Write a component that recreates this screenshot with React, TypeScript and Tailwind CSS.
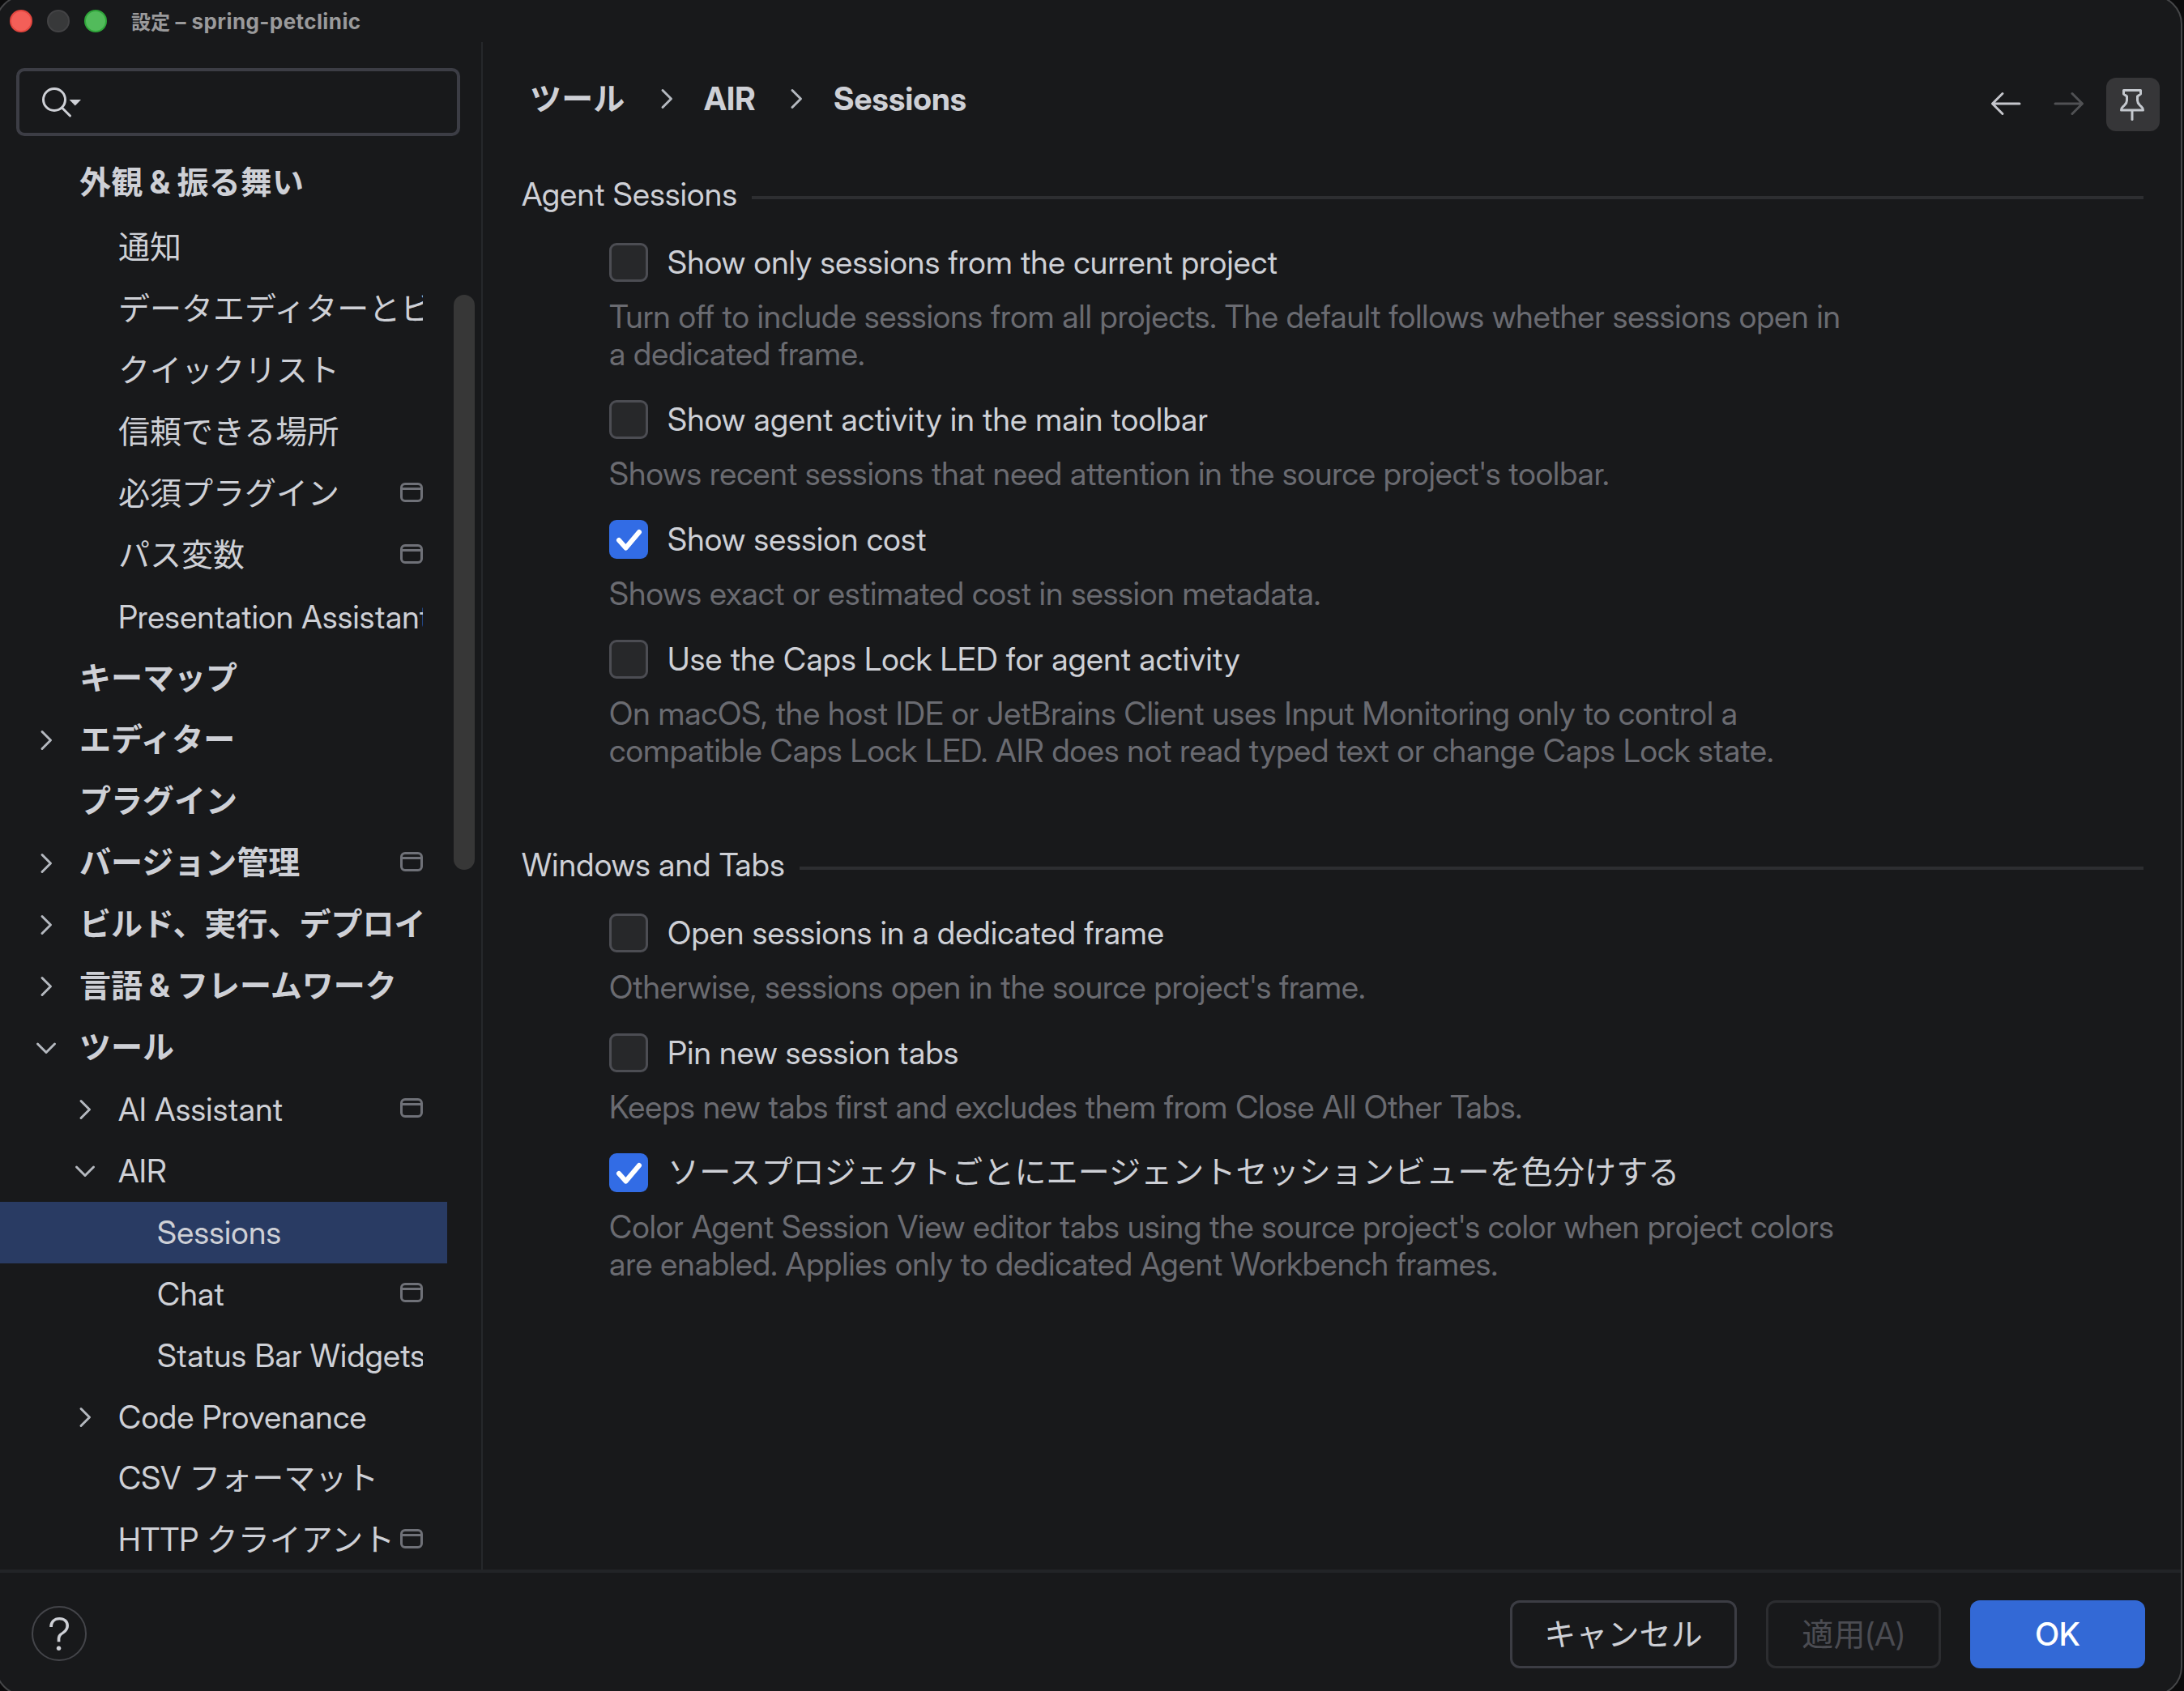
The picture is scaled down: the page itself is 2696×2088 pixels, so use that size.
import clsx from 'clsx';

interface TreeItem {
  label: string;
  level: 0 | 1 | 2;
  chevron?: 'right' | 'down';
  project?: boolean;
  selected?: boolean;
}

interface Option {
  label: string;
  checked?: boolean;
  description: string[];
}

const TREE: TreeItem[] = [
  { label: '通知', level: 1 },
  { label: 'データエディターとビューアー', level: 1 },
  { label: 'クイックリスト', level: 1 },
  { label: '信頼できる場所', level: 1 },
  { label: '必須プラグイン', level: 1, project: true },
  { label: 'パス変数', level: 1, project: true },
  { label: 'Presentation Assistant', level: 1 },
  { label: 'キーマップ', level: 0 },
  { label: 'エディター', level: 0, chevron: 'right' },
  { label: 'プラグイン', level: 0 },
  { label: 'バージョン管理', level: 0, chevron: 'right', project: true },
  { label: 'ビルド、実行、デプロイ', level: 0, chevron: 'right' },
  { label: '言語 & フレームワーク', level: 0, chevron: 'right' },
  { label: 'ツール', level: 0, chevron: 'down' },
  { label: 'AI Assistant', level: 1, chevron: 'right', project: true },
  { label: 'AIR', level: 1, chevron: 'down' },
  { label: 'Sessions', level: 2, selected: true },
  { label: 'Chat', level: 2, project: true },
  { label: 'Status Bar Widgets', level: 2 },
  { label: 'Code Provenance', level: 1, chevron: 'right' },
  { label: 'CSV フォーマット', level: 1 },
  { label: 'HTTP クライアント', level: 1, project: true },
];

const AGENT_SESSIONS: Option[] = [
  {
    label: 'Show only sessions from the current project',
    description: [
      'Turn off to include sessions from all projects. The default follows whether sessions open in',
      'a dedicated frame.',
    ],
  },
  {
    label: 'Show agent activity in the main toolbar',
    description: ["Shows recent sessions that need attention in the source project's toolbar."],
  },
  {
    label: 'Show session cost',
    checked: true,
    description: ['Shows exact or estimated cost in session metadata.'],
  },
  {
    label: 'Use the Caps Lock LED for agent activity',
    description: [
      'On macOS, the host IDE or JetBrains Client uses Input Monitoring only to control a',
      'compatible Caps Lock LED. AIR does not read typed text or change Caps Lock state.',
    ],
  },
];

const WINDOWS_AND_TABS: Option[] = [
  {
    label: 'Open sessions in a dedicated frame',
    description: ["Otherwise, sessions open in the source project's frame."],
  },
  {
    label: 'Pin new session tabs',
    description: ['Keeps new tabs first and excludes them from Close All Other Tabs.'],
  },
  {
    label: 'ソースプロジェクトごとにエージェントセッションビューを色分けする',
    checked: true,
    description: [
      "Color Agent Session View editor tabs using the source project's color when project colors",
      'are enabled. Applies only to dedicated Agent Workbench frames.',
    ],
  },
];

const isLatin = (text: string) => /^[\x20-\x7e]+$/.test(text);

function Chevron({ direction }: { direction: 'right' | 'down' }) {
  return (
    <svg
      viewBox="0 0 28 28"
      className={clsx('size-7', direction === 'down' && 'rotate-90')}
      fill="none"
      stroke="#b4b8bf"
      strokeWidth="3"
      strokeLinecap="round"
      strokeLinejoin="round"
    >
      <path d="M9 3.5 19.5 14 9 24.5" />
    </svg>
  );
}

function ProjectIcon() {
  return (
    <svg viewBox="0 0 28 24" className="mb-1 h-6 w-7 shrink-0" fill="none" stroke="#6f7178" strokeWidth="3">
      <rect x="1.5" y="1.5" width="25" height="21" rx="4.5" />
      <path d="M2 7.5h24" />
    </svg>
  );
}

function TreeRow({ item }: { item: TreeItem }) {
  return (
    <div className={clsx('flex h-[76px] w-[552px] shrink-0 items-center pr-[30px]', item.selected && 'bg-[#293b63]')}>
      <div
        className={clsx(
          'flex shrink-0 justify-end pr-[27px]',
          item.level === 0 && 'w-[98px]',
          item.level === 1 && 'w-[146px]',
          item.level === 2 && 'w-[194px]'
        )}
      >
        {item.chevron && <Chevron direction={item.chevron} />}
      </div>
      <div
        className={clsx(
          'min-w-0 flex-1 overflow-hidden whitespace-nowrap',
          item.level === 0 && 'font-bold',
          isLatin(item.label) ? 'tracking-[0.26px]' : 'pb-[2px] tracking-normal'
        )}
      >
        {item.label}
      </div>
      {item.project && <ProjectIcon />}
    </div>
  );
}

function Sidebar() {
  return (
    <aside className="flex w-[596px] shrink-0 flex-col border-r-2 border-[#26282b] pt-8">
      <div className="ml-5 flex h-[84px] w-[548px] shrink-0 items-center rounded-[10px] border-4 border-[#3c3d45] pl-[26px]">
        <svg viewBox="0 0 52 40" className="h-10 w-[52px]" fill="none" stroke="#ced0d6" strokeWidth="3" strokeLinecap="round">
          <circle cx="17" cy="17" r="13.5" />
          <path d="M26.5 27 36.5 37" />
          <path d="M35.5 17h14.5l-7.2 7.5z" fill="#ced0d6" stroke="none" />
        </svg>
      </div>
      <div className="flex min-h-0 flex-1 justify-between pr-2 pt-5">
        <div className="flex flex-col overflow-hidden">
          <div className="mb-1 flex h-[76px] shrink-0 items-center pb-[2px] pl-[98px] font-bold">外観 &amp; 振る舞い</div>
          {TREE.map((item) => (
            <TreeRow key={item.label} item={item} />
          ))}
        </div>
        <div className="mt-44 h-[710px] w-[26px] rounded-full bg-[#373737]" />
      </div>
    </aside>
  );
}

function Checkbox({ checked }: { checked?: boolean }) {
  if (!checked) {
    return <div className="size-12 shrink-0 rounded-[9px] border-3 border-[#4c4d53] bg-[#27282a]" />;
  }
  return (
    <div className="size-12 shrink-0 rounded-[9px] bg-[#326ce5]">
      <svg viewBox="0 0 48 48" fill="none" stroke="#fff" strokeWidth="6" strokeLinecap="round" strokeLinejoin="round">
        <path d="M12 25 20.5 34.5 37 15" />
      </svg>
    </div>
  );
}

function Section({ title, options }: { title: string; options: Option[] }) {
  return (
    <section>
      <div className="flex h-12 items-center gap-[18px]">
        <h2 className="tracking-[0.3px]">{title}</h2>
        <div className="mt-2 h-1 flex-1 bg-[#2d2e31]" />
      </div>
      <div className="mt-9 flex flex-col gap-[34px] pl-[108px]">
        {options.map((option) => (
          <div key={option.label}>
            <div className="flex h-12 items-center gap-6">
              <Checkbox checked={option.checked} />
              <span className={clsx('whitespace-nowrap', isLatin(option.label) ? 'tracking-[0.28px]' : 'pb-[3px]')}>
                {option.label}
              </span>
            </div>
            <div className="mt-5 whitespace-nowrap tracking-[0.06px] text-[#6a6b71]">
              {option.description.map((line) => (
                <div key={line}>{line}</div>
              ))}
            </div>
          </div>
        ))}
      </div>
    </section>
  );
}

function Header() {
  return (
    <div className="flex h-[66px] items-center">
      <div className="mb-[15px] flex flex-1 items-center pl-[10px] font-bold">
        <span className="w-[155px]">ツール</span>
        <Chevron direction="right" />
        <span className="ml-8 w-[100px]">AIR</span>
        <Chevron direction="right" />
        <span className="ml-8">Sessions</span>
      </div>
      <svg viewBox="0 0 40 32" className="mb-0.5 mr-[38px] h-8 w-10" fill="none" stroke="#c4c5cb" strokeWidth="3" strokeLinecap="round" strokeLinejoin="round">
        <path d="M37 16H4M16 3.5 3.5 16 16 28.5" />
      </svg>
      <svg viewBox="0 0 40 32" className="mb-0.5 mr-[26px] h-8 w-10" fill="none" stroke="#505154" strokeWidth="3" strokeLinecap="round" strokeLinejoin="round">
        <path d="M3 16h33M24 3.5 36.5 16 24 28.5" />
      </svg>
      <div className="flex size-[66px] items-center justify-center rounded-xl bg-[#363638]">
        <svg viewBox="0 0 32 42" className="h-[42px] w-8" fill="none" stroke="#c4c8ce" strokeWidth="3" strokeLinecap="round" strokeLinejoin="round">
          <path d="M4.5 3.5h21v4.5l-4 3v5c0 2.5 1 4 3 6 3 3 4 3 4 6h-27c0-3 1-3 4-6 2-2 3-3.5 3-6v-5l-4-3z" />
          <path d="M15 29v10.5" />
        </svg>
      </div>
    </div>
  );
}

function Footer() {
  return (
    <footer className="flex h-[150px] shrink-0 items-center border-t-4 border-[#222427] pl-[39px] pr-11 pt-[6px]">
      <div className="mb-0.5 flex size-[68px] items-center justify-center rounded-full border-2 border-[#44454a] pl-px pt-px text-[56px] font-light">
        ?
      </div>
      <div className="ml-auto flex gap-9">
        <button className="h-[84px] w-[280px] rounded-xl border-3 border-[#3c3d44] pb-px">キャンセル</button>
        <button className="h-[84px] w-[216px] rounded-xl border-3 border-[#2c2d30] text-[#4b4c52]">適用(A)</button>
        <button className="h-[84px] w-[216px] rounded-xl bg-[#3369d6] font-medium text-white">OK</button>
      </div>
    </footer>
  );
}

export default function App() {
  return (
    <div className="flex h-[2088px] w-[2696px] overflow-hidden bg-[#0b0b0c] font-['Inter_Display','Inter','Noto_Sans_CJK_JP',sans-serif] text-[39px] leading-[46px] tracking-[0.13px] text-[#ced0d6]">
      <div className="-ml-[6px] -mt-[6px] flex h-[2100px] w-[2700px] shrink-0 flex-col rounded-[36px] border-2 border-[#454648] bg-[#18191b] pb-1 pl-1 pt-1">
        <div className="flex h-[52px] shrink-0 items-center gap-[18px] pl-3">
          <div className="size-7 rounded-full border-2 border-[#e2463f] bg-[#f35f58]" />
          <div className="size-7 rounded-full border-2 border-[#434345] bg-[#38393a]" />
          <div className="size-7 rounded-full border-2 border-[#2fa63a] bg-[#52bb5b]" />
          <div className="ml-3 pt-px font-['Inter','Noto_Sans_CJK_JP',sans-serif] text-[26px] font-bold tracking-[0.4px] text-[#9a9a9b]">
            <span className="text-2xl tracking-normal">設定</span> – spring-petclinic
          </div>
        </div>
        <div className="flex min-h-0 flex-1">
          <Sidebar />
          <main className="flex min-w-0 flex-1 flex-col pl-12 pt-11">
            <div className="pr-[26px]">
              <Header />
            </div>
            <div className="mt-[54px] flex flex-col gap-[94px] pr-[46px]">
              <Section title="Agent Sessions" options={AGENT_SESSIONS} />
              <Section title="Windows and Tabs" options={WINDOWS_AND_TABS} />
            </div>
          </main>
        </div>
        <Footer />
      </div>
    </div>
  );
}
